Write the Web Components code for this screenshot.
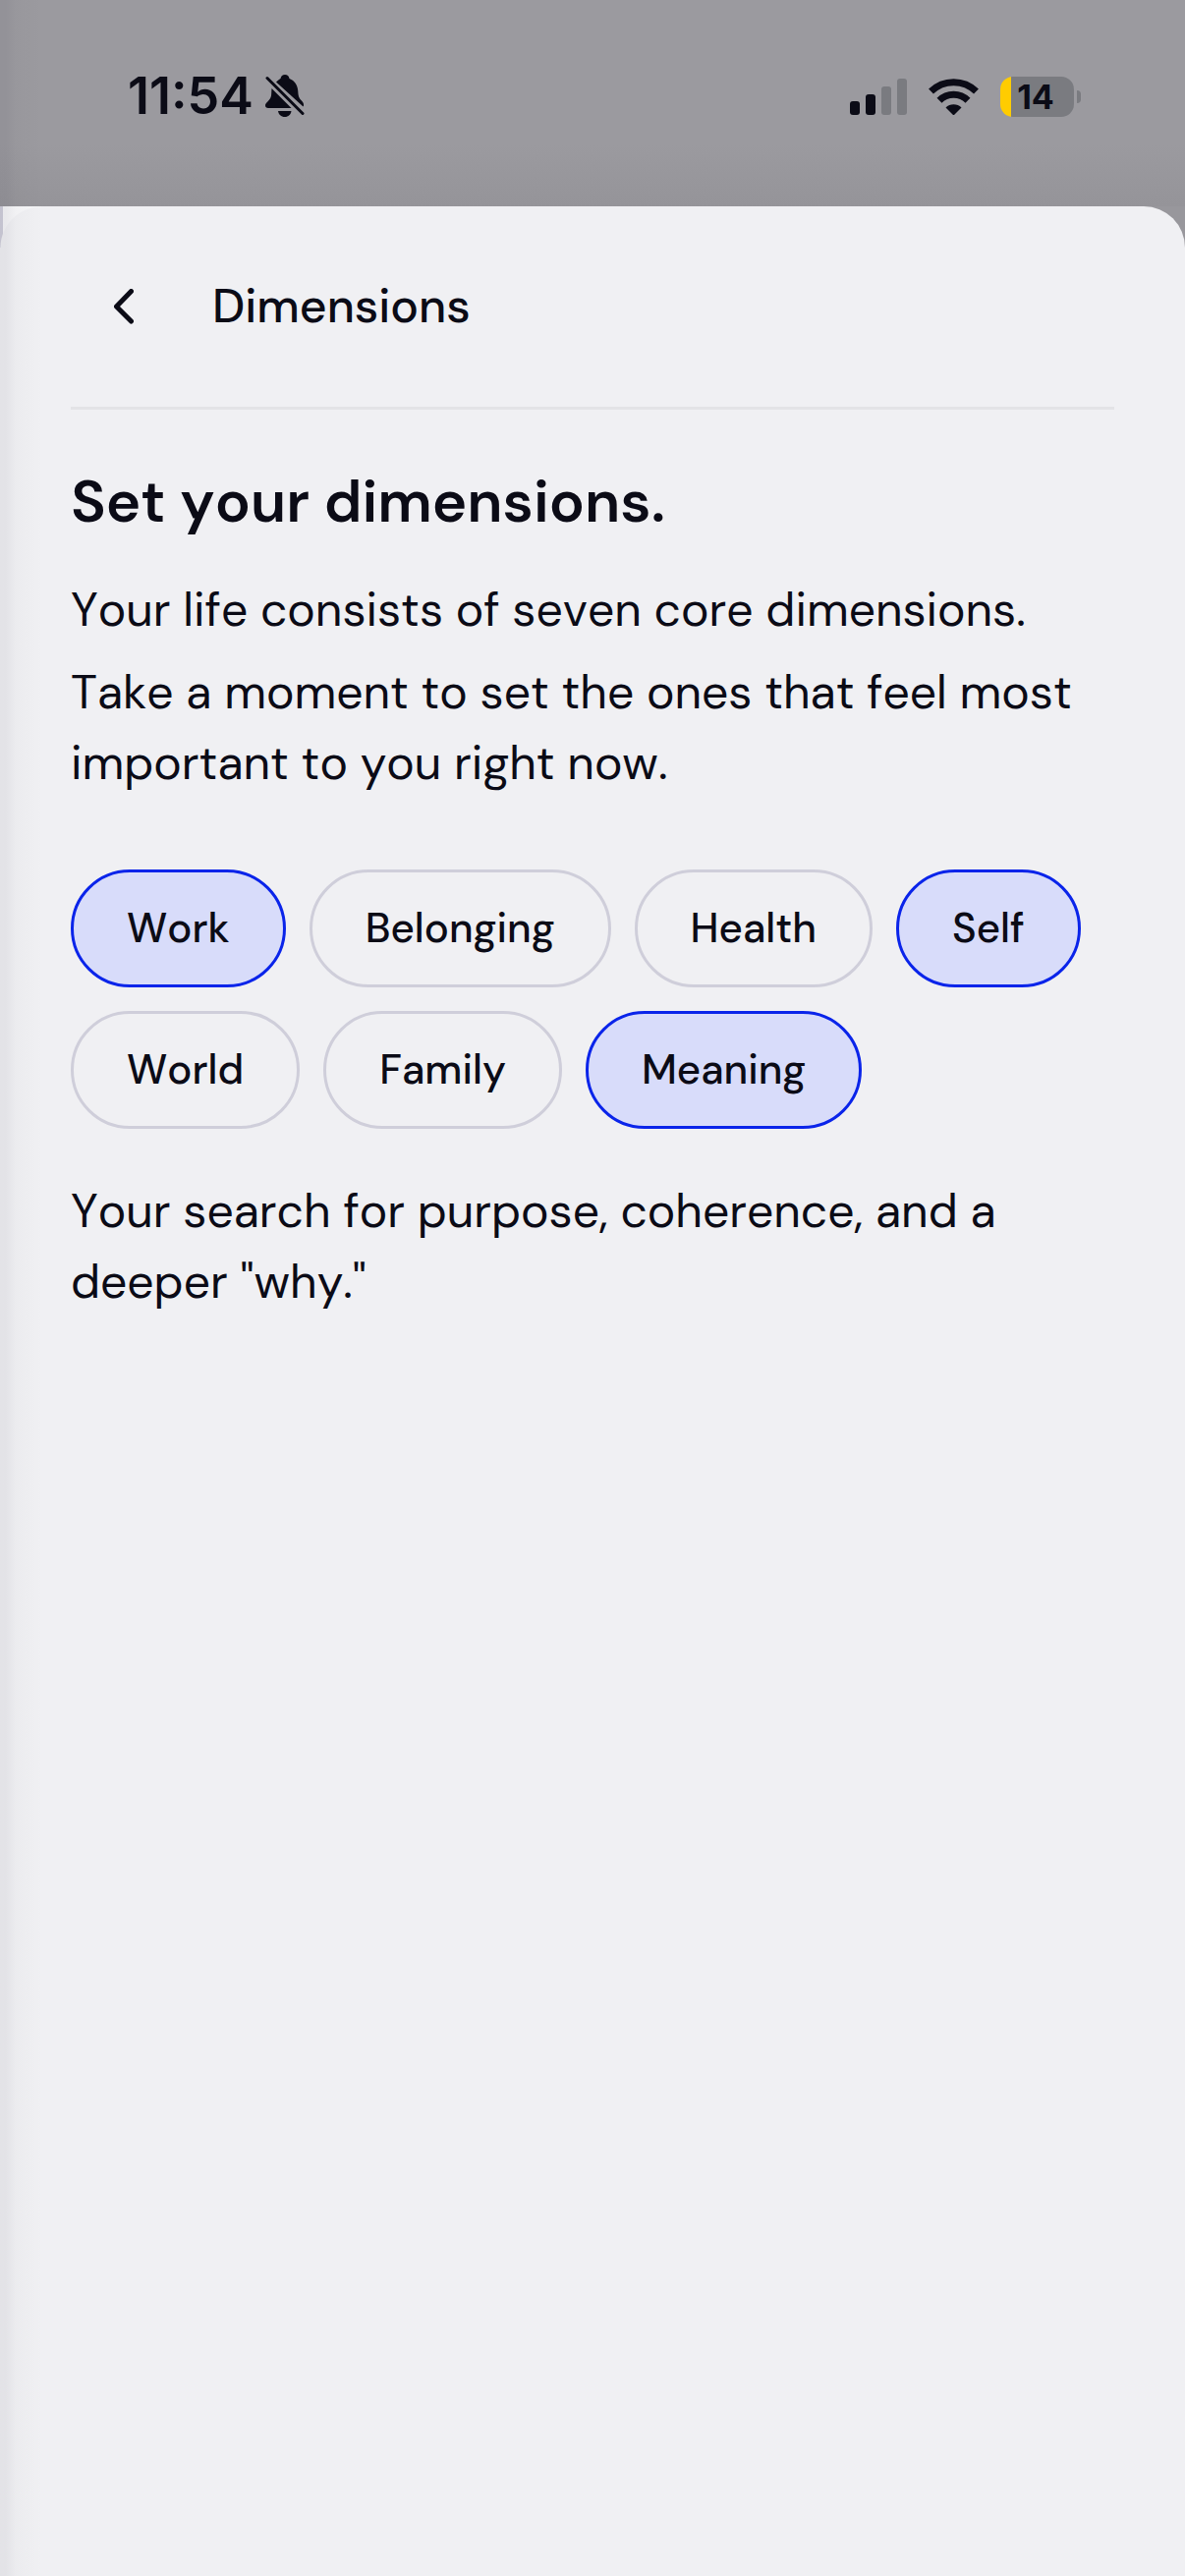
<!DOCTYPE html>
<html lang="en">
<head>
    <meta charset="UTF-8">
    <meta name="viewport" content="width=device-width, initial-scale=1.0">
    <title>Dimensions</title>
    <style>
        html, body { margin: 0; height: 100%; }
        body {
            font-family: "DM Sans", Inter, sans-serif;
            font-optical-sizing: none;
            font-kerning: none;
            color: #0b0b16;
            background: #98979c;
        }
        p { margin: 0; }
    </style>
</head>
<body>
    <app-screen>
        <status-bar slot="status" time="11:54" battery="14"></status-bar>
        <sheet-header slot="header" sheet-title="Dimensions"></sheet-header>
        <text-block block-title="Set your dimensions.">
            <p>Your life consists of seven core dimensions.</p>
            <p>Take a moment to set the ones that feel most important to you right now.</p>
        </text-block>
        <chip-group label="Dimensions">
            <dimension-chip selected>Work</dimension-chip>
            <dimension-chip>Belonging</dimension-chip>
            <dimension-chip>Health</dimension-chip>
            <dimension-chip selected>Self</dimension-chip>
            <dimension-chip>World</dimension-chip>
            <dimension-chip>Family</dimension-chip>
            <dimension-chip selected>Meaning</dimension-chip>
        </chip-group>
        <text-block>
            <p>Your search for purpose, coherence, and a deeper "why."</p>
        </text-block>
    </app-screen>

    <script>
        class AppScreen extends HTMLElement {
            constructor() {
                super();
                this.attachShadow({ mode: 'open' });
            }

            connectedCallback() {
                this.shadowRoot.innerHTML = `
                    <style>
                        :host {
                            display: flex;
                            flex-direction: column;
                            min-height: 100%;
                            position: relative;
                        }
                        main {
                            flex: 1;
                            position: relative;
                            padding: 0 72px 72px;
                            background: #f0f0f3;
                            border-top-right-radius: 42px;
                        }
                        .content {
                            display: flex;
                            flex-direction: column;
                            gap: 48px;
                            padding-top: 58px;
                        }
                        /* sliver of the previous screen behind the rounded corner */
                        .corner {
                            position: absolute;
                            top: 0;
                            left: 0;
                            width: 42px;
                            height: 42px;
                            background:
                                radial-gradient(circle at 42px 42px, #f0f0f3 41px, transparent 42px),
                                linear-gradient(90deg, #cfceda 3px, #f6f6f8 3px);
                        }
                        /* shadow cast by the screen that slides over */
                        .edge {
                            position: absolute;
                            top: 0;
                            bottom: 0;
                            left: 0;
                            width: 44px;
                            background: linear-gradient(90deg, rgba(20, 18, 40, 0.06) 6px, rgba(20, 18, 30, 0.02) 16px, transparent);
                            pointer-events: none;
                        }
                    </style>
                    <slot name="status"></slot>
                    <main>
                        <div class="corner"></div>
                        <slot name="header"></slot>
                        <div class="content"><slot></slot></div>
                    </main>
                    <div class="edge"></div>
                `;
            }
        }
        customElements.define('app-screen', AppScreen);

        class StatusBar extends HTMLElement {
            constructor() {
                super();
                this.attachShadow({ mode: 'open' });
            }

            connectedCallback() {
                const time = this.getAttribute('time') || '';
                const battery = this.getAttribute('battery') || '100';

                this.shadowRoot.innerHTML = `
                    <style>
                        :host {
                            display: flex;
                            justify-content: space-between;
                            align-items: center;
                            box-sizing: border-box;
                            height: 210px;
                            padding: 0 106px 14px 130px;
                            font-family: Inter, sans-serif;
                            background: linear-gradient(#9b9a9f 70%, #959499);
                        }
                        svg { display: block; }
                        .left, .right { display: flex; align-items: center; }
                        .left { gap: 12px; }
                        .right { gap: 22px; }
                        .time { font-size: 52px; line-height: 60px; font-weight: 600; }
                        .battery { display: flex; align-items: center; gap: 3px; }
                        .level {
                            width: 75px;
                            height: 41px;
                            box-sizing: border-box;
                            padding-right: 3px;
                            border-radius: 13px;
                            background: linear-gradient(90deg, #ffcc00 11px, #7a7b80 11px);
                            font-size: 34px;
                            line-height: 41px;
                            font-weight: 700;
                            text-align: center;
                        }
                        .cap { width: 4px; height: 13px; border-radius: 0 6px 6px 0; background: #7a7b80; }
                    </style>
                    <div class="left">
                        <span class="time">${time}</span>
                        <svg width="40" height="44" viewBox="0 0 40 44" role="img" aria-label="Silent mode">
                            <path fill="#0b0b16" d="M11 7.500C13 5.500 14.500 4.500 15.500 4C16 1.500 17.500 0 20 0S24 1.500 24.500 4C30 6 33 11 33.300 17C33.500 22 34.500 24 36.500 26C38.500 28 39.300 29.500 39 31.500L38.500 32.500Z"/>
                            <path fill="#0b0b16" d="M6.500 14L26.500 34H3C1 34 0 33 0 31.200C0 28.500 5 26.500 6 21.500C6.300 19.500 6.300 16 6.500 14Z"/>
                            <path fill="#0b0b16" d="M13 37H26.500C26 40.500 23.500 43 19.800 43S13.500 40.500 13 37Z"/>
                            <path stroke="#0b0b16" stroke-width="3" stroke-linecap="round" d="M2 3.500L38 39.500"/>
                        </svg>
                    </div>
                    <div class="right">
                        <svg width="58" height="38" viewBox="0 0 58 38" role="img" aria-label="Signal">
                            <g fill="#0b0b16">
                                <rect y="24" width="10" height="14" rx="3"/>
                                <rect x="16" y="17" width="10" height="21" rx="3"/>
                            </g>
                            <g fill="#7a7b80">
                                <rect x="32" y="9" width="10" height="29" rx="3"/>
                                <rect x="48" y="1" width="10" height="37" rx="3"/>
                            </g>
                        </svg>
                        <svg width="51" height="38" viewBox="0 0 51 38" role="img" aria-label="Wi-Fi">
                            <g fill="none" stroke="#0b0b16" stroke-width="7">
                                <path d="M2.500 14A33 33 0 0 1 48.500 14"/>
                                <path d="M11 23.200A20.500 20.500 0 0 1 40 23.200"/>
                            </g>
                            <path fill="#0b0b16" d="M17.500 30.500A11.500 11.500 0 0 1 33.500 30.500L25.500 38.500Z"/>
                        </svg>
                        <div class="battery">
                            <div class="level">${battery}</div>
                            <div class="cap"></div>
                        </div>
                    </div>
                `;
            }
        }
        customElements.define('status-bar', StatusBar);

        class SheetHeader extends HTMLElement {
            constructor() {
                super();
                this.attachShadow({ mode: 'open' });
            }

            connectedCallback() {
                const title = this.getAttribute('sheet-title') || '';

                this.shadowRoot.innerHTML = `
                    <style>
                        :host {
                            display: flex;
                            align-items: center;
                            gap: 36px;
                            padding: 48px 0;
                            border-bottom: 3px solid #e3e3e6;
                        }
                        button {
                            display: grid;
                            place-items: center;
                            width: 108px;
                            height: 108px;
                            padding: 0;
                            border: 0;
                            background: none;
                            color: inherit;
                        }
                        h1 { margin: 0; font-size: 48px; line-height: 60px; font-weight: 500; }
                    </style>
                    <button type="button" aria-label="Back">
                        <svg width="20" height="36" viewBox="0 0 20 36" fill="none" stroke="currentColor" stroke-width="5" stroke-linecap="round" stroke-linejoin="round">
                            <path d="M17.500 2.500L2.500 18L17.500 33"/>
                        </svg>
                    </button>
                    <h1>${title}</h1>
                `;
            }
        }
        customElements.define('sheet-header', SheetHeader);

        class TextBlock extends HTMLElement {
            constructor() {
                super();
                this.attachShadow({ mode: 'open' });
            }

            connectedCallback() {
                const title = this.getAttribute('block-title') || '';

                this.shadowRoot.innerHTML = `
                    <style>
                        :host { display: flex; flex-direction: column; gap: 38px; }
                        h2 { margin: 0; font-size: 60px; line-height: 72px; font-weight: 600; }
                        .text {
                            display: flex;
                            flex-direction: column;
                            gap: 12px;
                            font-size: 48px;
                            line-height: 72px;
                        }
                    </style>
                    ${title ? `<h2>${title}</h2>` : ''}
                    <div class="text"><slot></slot></div>
                `;
            }
        }
        customElements.define('text-block', TextBlock);

        class ChipGroup extends HTMLElement {
            constructor() {
                super();
                this.attachShadow({ mode: 'open' });
            }

            connectedCallback() {
                const label = this.getAttribute('label') || '';

                this.shadowRoot.innerHTML = `
                    <style>
                        :host { display: block; padding-top: 24px; }
                        .chips { display: flex; flex-wrap: wrap; gap: 24px; }
                    </style>
                    <div class="chips" role="group" aria-label="${label}"><slot></slot></div>
                `;
            }
        }
        customElements.define('chip-group', ChipGroup);

        class DimensionChip extends HTMLElement {
            constructor() {
                super();
                this.attachShadow({ mode: 'open' });
            }

            connectedCallback() {
                this.shadowRoot.innerHTML = `
                    <style>
                        :host { display: block; }
                        button {
                            display: block;
                            height: 120px;
                            padding: 0 54px;
                            border: 3px solid #cfceda;
                            border-radius: 60px;
                            background: transparent;
                            color: inherit;
                            font-family: inherit;
                            font-size: 42px;
                            line-height: 60px;
                            font-weight: 500;
                            font-optical-sizing: inherit;
                            font-kerning: inherit;
                        }
                        button[aria-pressed="true"] { border-color: #0a24ea; background: #d8dcfa; }
                    </style>
                    <button type="button" aria-pressed="${this.hasAttribute('selected')}"><slot></slot></button>
                `;
                const button = this.shadowRoot.querySelector('button');
                button.addEventListener('click', () => {
                    this.toggleAttribute('selected');
                    button.setAttribute('aria-pressed', this.hasAttribute('selected'));
                });
            }
        }
        customElements.define('dimension-chip', DimensionChip);
    </script>
</body>
</html>
